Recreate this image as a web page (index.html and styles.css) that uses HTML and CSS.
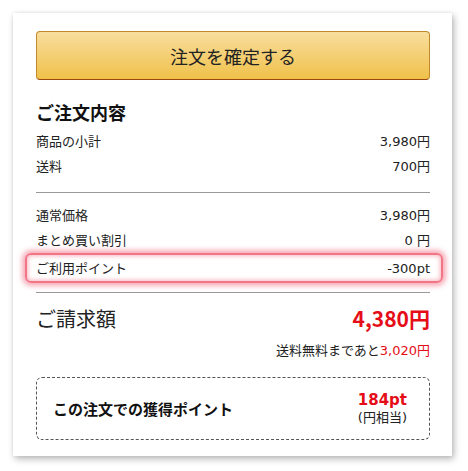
FILE: index.html
```html
<!DOCTYPE html>
<html lang="ja">
<head>
<meta charset="utf-8">
<link rel="stylesheet" href="styles.css">
</head>
<body>
<div class="card">
  <button class="confirm">注文を確定する</button>
  <h2 class="heading">ご注文内容</h2>
  <div class="row"><span>商品の小計</span><span>3,980円</span></div>
  <div class="row"><span>送料</span><span>700円</span></div>
  <hr class="divider first">
  <div class="row"><span>通常価格</span><span>3,980円</span></div>
  <div class="row"><span>まとめ買い割引</span><span>0 円</span></div>
  <div class="row highlight"><span>ご利用ポイント</span><span>-300pt</span></div>
  <hr class="divider second">
  <div class="total"><span class="total-label">ご請求額</span><span class="total-value">4,380円</span></div>
  <div class="free-ship">送料無料まであと<span class="red">3,020円</span></div>
  <div class="points">
    <span class="points-label">この注文での獲得ポイント</span>
    <span class="points-value"><span class="pt">184pt</span><span class="yen">(円相当)</span></span>
  </div>
</div>
</body>
</html>
```
FILE: styles.css
```css
html, body {
  margin: 0;
  background: #fff;
}
body {
  padding: 13px;
  font-family: "DejaVu Sans", "Noto Sans CJK JP", sans-serif;
  color: #222;
}
.card {
  width: 439px;
  box-sizing: border-box;
  padding: 18px 22px 16px 23px;
  background: #fff;
  box-shadow: 2px 3px 7px rgba(0,0,0,0.28), 0 0 3px rgba(0,0,0,0.08);
  display: flex;
  flex-direction: column;
}
.confirm {
  height: 49px;
  border: 1px solid #c08a2a;
  border-bottom-color: #9a4a10;
  border-radius: 4px;
  background: linear-gradient(#f8de9e, #f0c14a);
  font-family: inherit;
  font-size: 18px;
  color: #222;
  padding: 0;
}
.heading {
  margin: 22px 0 0;
  font-size: 18px;
  line-height: 24px;
  font-weight: bold;
  color: #111;
}
.row {
  display: flex;
  justify-content: space-between;
  font-size: 13px;
  line-height: 25px;
}
.heading + .row {
  margin-top: 3px;
}
.divider {
  border: 0;
  border-top: 1px solid #999;
  margin: 0;
}
.divider.first {
  margin-top: 13px;
  margin-bottom: 10px;
}
.highlight {
  margin: 0 -13px 0 -11px;
  padding: 0 11px 0 9px;
  height: 30px;
  box-sizing: border-box;
  align-items: center;
  border: 2px solid #f27585;
  border-radius: 6px;
  box-shadow: 0 0 5px 3px rgba(240, 90, 115, 0.5), inset 0 0 4px 1px rgba(240, 90, 115, 0.45);
}
.divider.second {
  margin-top: 9px;
}
.total {
  display: flex;
  justify-content: space-between;
  align-items: center;
  height: 30px;
  margin-top: 10px;
}
.total-label {
  font-size: 20px;
  font-family: "Noto Sans CJK JP", sans-serif;
}
.total-value {
  font-family: "Noto Sans CJK JP", sans-serif;
  font-size: 21px;
  font-weight: bold;
  color: #e50d17;
}
.free-ship {
  margin-top: 8px;
  text-align: right;
  font-size: 13px;
  line-height: 20px;
}
.red {
  color: #e50d17;
}
.points {
  margin-top: 16px;
  height: 63px;
  box-sizing: border-box;
  border: 1px dashed #555;
  border-radius: 6px;
  display: flex;
  justify-content: space-between;
  align-items: center;
  padding: 0 22px 0 16px;
}
.points-label {
  font-size: 15px;
  font-weight: bold;
  color: #111;
}
.points-value {
  display: flex;
  flex-direction: column;
  align-items: center;
}
.pt {
  font-size: 15px;
  font-weight: bold;
  color: #e50d17;
  line-height: 18px;
}
.yen {
  font-size: 13px;
  line-height: 17px;
}
```
